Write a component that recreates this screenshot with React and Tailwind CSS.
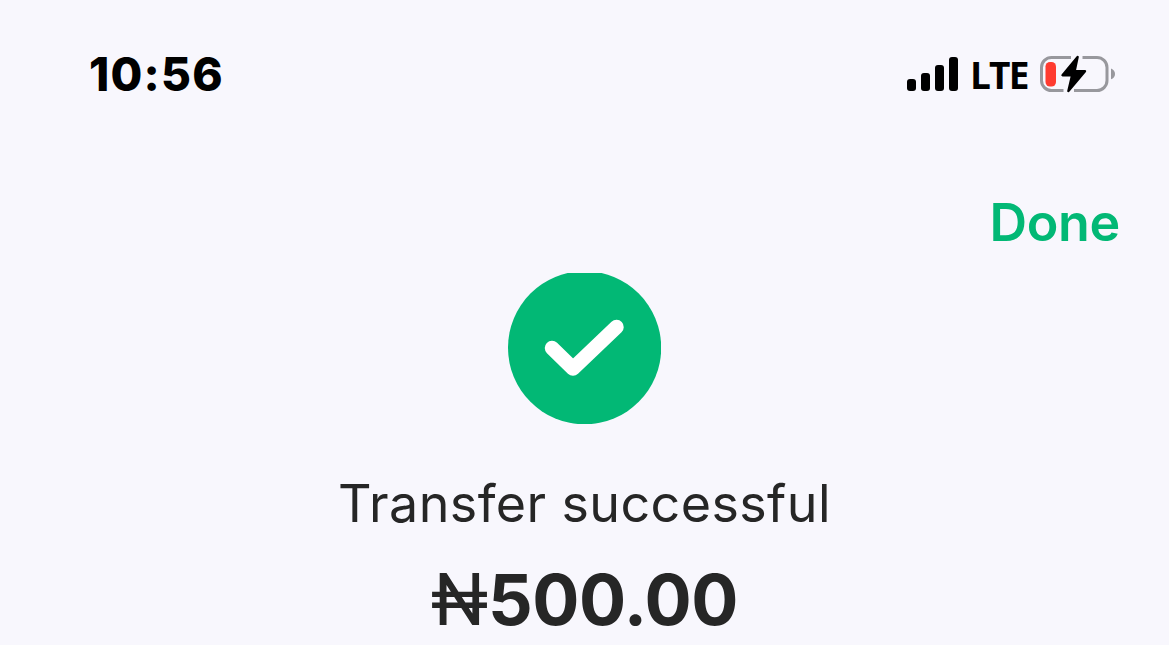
const SignalIcon = () => (
  <svg width="52" height="34" viewBox="0 0 52 34" className="shrink-0 fill-black">
    <rect x="0" y="22" width="9" height="12" rx="3" />
    <rect x="14" y="16" width="9" height="18" rx="3" />
    <rect x="28" y="8" width="9" height="26" rx="3" />
    <rect x="42" y="0" width="9" height="34" rx="3" />
  </svg>
);

const BatteryIcon = () => (
  <svg width="76" height="40" viewBox="0 0 76 40" className="shrink-0" fill="none">
    <path
      d="M31 3.5H11.5a10 10 0 0 0-10 10v13a10 10 0 0 0 10 10H23.5M42.5 3.5H57a10 10 0 0 1 10 10v13a10 10 0 0 1-10 10H34"
      stroke="#98989d"
      strokeWidth="3"
    />
    <path d="M71 14.5c2.6 1.1 4 3 4 5.4s-1.4 4.3-4 5.4z" fill="#98989d" />
    <rect x="5.5" y="8" width="10.5" height="24.5" rx="4.5" fill="#ff3b30" />
    <path
      d="M37.6 3L22.5 21.2h9.6L28.4 37 45 17.2H34.6z"
      fill="#000"
      stroke="#000"
      strokeWidth="2.4"
      strokeLinejoin="round"
    />
  </svg>
);

const SuccessIcon = () => (
  <svg width="154" height="152" viewBox="0 0 154 152" fill="none">
    <clipPath id="badge">
      <rect x="0" y="0" width="153" height="151" />
    </clipPath>
    <circle cx="76.6" cy="74.7" r="76.6" fill="#02b875" clipPath="url(#badge)" />
    <path
      d="M44 75L65 95.5L108.5 54"
      stroke="#fff"
      strokeWidth="14.5"
      strokeLinecap="round"
      strokeLinejoin="round"
    />
  </svg>
);

const App = () => {
  return (
    <div className="h-[645px] w-[1169px] overflow-hidden bg-[#f8f7fd] text-[#262626]">
      {/* Status bar */}
      <div className="flex h-[148px] items-center justify-between pl-[89px] pr-[53px] text-black">
        <span className="font-['Inter',sans-serif] text-[46px] leading-[48px] font-extrabold tracking-[1.2px]">
          10:56
        </span>
        <div className="flex items-center">
          <SignalIcon />
          <span className="ml-[11px] mt-[2px] w-[70px] font-['Open_Sans',sans-serif] text-[37px] leading-[40px] font-bold tracking-[-1.8px]">
            LTE
          </span>
          <BatteryIcon />
        </div>
      </div>

      {/* Header action */}
      <div className="flex h-[125px] justify-end pt-[43px] pr-[49px]">
        <button className="h-[64px] font-['Inter',sans-serif] text-[52px] leading-[64px] font-semibold tracking-[-0.3px] text-[#02b875]">
          Done
        </button>
      </div>

      {/* Transfer result */}
      <div className="flex flex-col items-center">
        <SuccessIcon />
        <p className="mt-[47px] font-['Inter',sans-serif] text-[52px] leading-[64px] tracking-[0.4px]">
          Transfer successful
        </p>
        <p className="mt-[24px] flex leading-[80px]">
          <span className="mt-[1px] font-['Roboto',sans-serif] text-[72px] font-normal">₦</span>
          <span className="font-['Inter',sans-serif] text-[70px] font-bold tracking-[-0.5px]">500.00</span>
        </p>
      </div>
    </div>
  );
};

export default App;
